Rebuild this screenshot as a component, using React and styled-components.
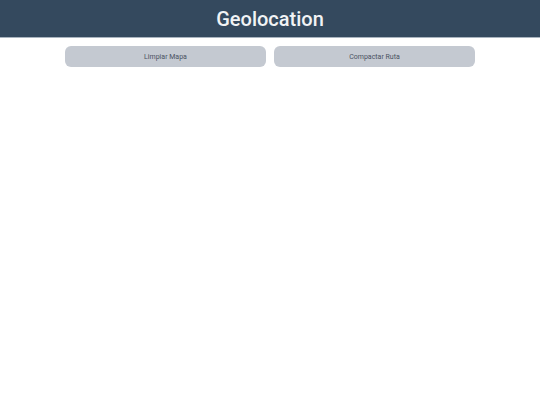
import React from "react";
import styled, { createGlobalStyle } from "styled-components";

const GlobalStyle = createGlobalStyle`
  body {
    margin: 0;
    background: #ffffff;
    font-family: Roboto, "Liberation Sans", sans-serif;
  }
`;

const Header = styled.header`
  height: 37px;
  background: #34495e;
  border-bottom: 1px solid #a9b4bf;
  display: flex;
  align-items: center;
  justify-content: center;
`;

const Title = styled.h1`
  margin: 0;
  font-size: 20px;
  font-weight: 500;
  color: #f1f3f5;
`;

const Toolbar = styled.div`
  width: 410px;
  margin: 8px auto 0;
  display: flex;
  gap: 8px;
`;

const Button = styled.button`
  flex: 1;
  height: 21px;
  border: none;
  border-radius: 6px;
  background: #c4c9d1;
  color: #4a5261;
  font-family: Roboto, "Liberation Sans", sans-serif;
  font-size: 7px;
  cursor: pointer;
`;

const App = () => {
  return (
    <div>
      <GlobalStyle />
      <Header>
        <Title>Geolocation</Title>
      </Header>
      <Toolbar>
        <Button>Limpiar Mapa</Button>
        <Button>Compactar Ruta</Button>
      </Toolbar>
    </div>
  );
};

export default App;
